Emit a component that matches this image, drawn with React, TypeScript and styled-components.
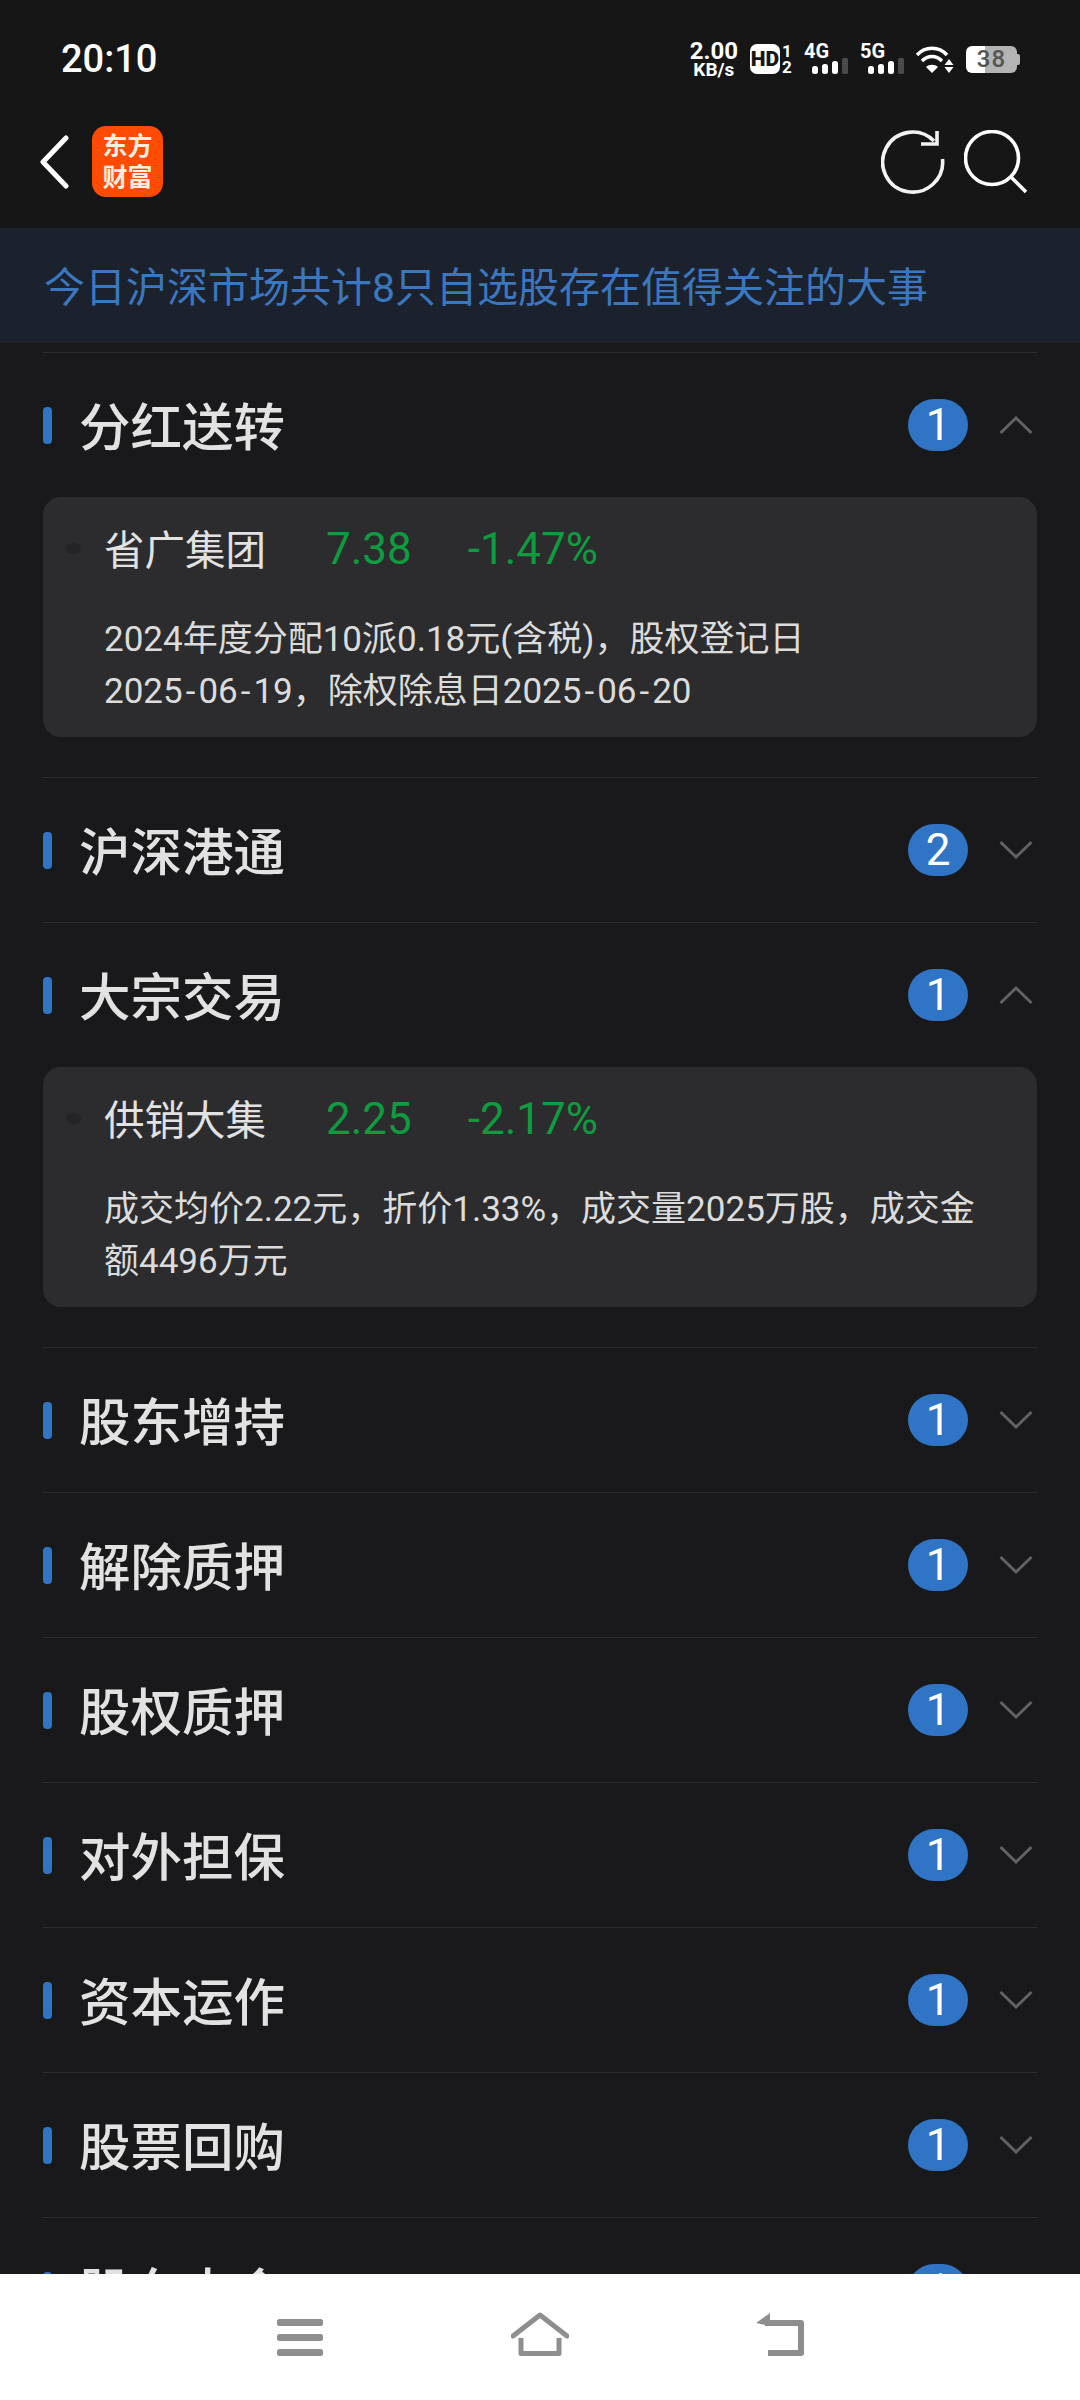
import React from "react";
import styled, { createGlobalStyle } from "styled-components";

const GlobalStyle = createGlobalStyle`
  html, body {
    margin: 0;
    padding: 0;
    background: #19191b;
  }
  * {
    box-sizing: border-box;
  }
`;

const FONT = `Roboto, "Noto Sans CJK SC", sans-serif`;

interface Stock {
  name: string;
  price: string;
  change: string;
  lines: string[];
}

interface Section {
  title: string;
  count: number;
  stock?: Stock;
}

const sections: Section[] = [
  {
    title: "分红送转",
    count: 1,
    stock: {
      name: "省广集团",
      price: "7.38",
      change: "-1.47%",
      lines: ["2024年度分配10派0.18元(含税)，股权登记日", "2025-06-19，除权除息日2025-06-20"],
    },
  },
  { title: "沪深港通", count: 2 },
  {
    title: "大宗交易",
    count: 1,
    stock: {
      name: "供销大集",
      price: "2.25",
      change: "-2.17%",
      lines: ["成交均价2.22元，折价1.33%，成交量2025万股，成交金", "额4496万元"],
    },
  },
  { title: "股东增持", count: 1 },
  { title: "解除质押", count: 1 },
  { title: "股权质押", count: 1 },
  { title: "对外担保", count: 1 },
  { title: "资本运作", count: 1 },
  { title: "股票回购", count: 1 },
  { title: "股东大会", count: 1 },
];

function SignalBars() {
  return (
    <svg width="36" height="16" viewBox="0 0 36 16">
      <rect x="0" y="8" width="6" height="8" rx="2.5" fill="#fff" />
      <rect x="10" y="6" width="6" height="10" rx="2.5" fill="#fff" />
      <rect x="20" y="3" width="6" height="13" rx="2.5" fill="#fff" />
      <rect x="30" y="0" width="6" height="16" rx="1.5" fill="#4a4a4a" />
    </svg>
  );
}

function WifiIcon() {
  return (
    <svg width="38" height="30" viewBox="0 0 38 30">
      <path d="M1 11 C9 2 23 2 31 11" fill="none" stroke="#fff" strokeWidth="3.4" />
      <path d="M6 17 C12 11 20 11 26 17" fill="none" stroke="#fff" strokeWidth="3.4" />
      <path d="M16 29 L10 23 C13 20 19 20 22 23 Z" fill="#fff" />
      <path d="M33 15 L37.5 21 H28.5 Z M28.5 23 H37.5 L33 29 Z" fill="#fff" />
    </svg>
  );
}

function Chevron({ open }: { open: boolean }) {
  return (
    <ChevronSvg viewBox="0 0 34 20" fill="none" stroke="#626264" strokeWidth="3">
      <polyline points={open ? "1.5,18 17,3 32.5,18" : "1.5,2 17,17 32.5,2"} />
    </ChevronSvg>
  );
}

// the hyphens in the dates are wider than Roboto's
function renderDescLine(line: string) {
  return line.split("-").map((part, i) => (
    <React.Fragment key={i}>
      {i > 0 && <Dash>-</Dash>}
      {part}
    </React.Fragment>
  ));
}

export default function App() {
  return (
    <Page>
      <GlobalStyle />
      <StatusBar>
        <Clock>20:10</Clock>
        <StatusIcons>
          <Speed>
            <SpeedValue>2.00</SpeedValue>
            <SpeedUnit>KB/s</SpeedUnit>
          </Speed>
          <HdGroup>
            <HdBadge>HD</HdBadge>
            <SimSlots>
              <span>1</span>
              <span>2</span>
            </SimSlots>
          </HdGroup>
          <Network>
            <NetworkLabel>4G</NetworkLabel>
            <SignalBars />
          </Network>
          <Network>
            <NetworkLabel>5G</NetworkLabel>
            <SignalBars />
          </Network>
          <WifiIcon />
          <Battery>
            <BatteryBody>38</BatteryBody>
            <BatteryNub />
          </Battery>
        </StatusIcons>
      </StatusBar>

      <NavBar>
        <NavLeft>
          <svg width="30" height="54" viewBox="0 0 30 54" fill="none" stroke="#fff" strokeWidth="5" strokeLinecap="round" strokeLinejoin="round">
            <polyline points="26,3 3,27 26,51" />
          </svg>
          <Logo>
            <span>东方</span>
            <span>财富</span>
          </Logo>
        </NavLeft>
        <NavRight>
          <svg width="64" height="64" viewBox="0 0 64 64" fill="none" stroke="#f2f2f2" strokeWidth="3.6">
            <path d="M61.5 29 A30 30 0 1 1 53 11" />
            <path d="M40 14 H56 V1" />
          </svg>
          <svg width="64" height="64" viewBox="0 0 64 64" fill="none" stroke="#fff" strokeWidth="3.6">
            <circle cx="28" cy="28" r="26.5" />
            <path d="M47 47 L62 62" />
          </svg>
        </NavRight>
      </NavBar>

      <Banner>今日沪深市场共计8只自选股存在值得关注的大事</Banner>

      <Content>
        {sections.map((section) => (
          <SectionBlock key={section.title}>
            <SectionHeader>
              <TitleBar />
              <SectionTitle>{section.title}</SectionTitle>
              <CountBadge>{section.count}</CountBadge>
              <Chevron open={!!section.stock} />
            </SectionHeader>
            {section.stock && (
              <StockCard>
                <StockRow>
                  <StockDot />
                  <StockName>{section.stock.name}</StockName>
                  <StockValue>{section.stock.price}</StockValue>
                  <StockValue>{section.stock.change}</StockValue>
                </StockRow>
                <StockDesc>
                  {section.stock.lines.map((line) => (
                    <DescLine key={line}>{renderDescLine(line)}</DescLine>
                  ))}
                </StockDesc>
              </StockCard>
            )}
          </SectionBlock>
        ))}
      </Content>

      <BottomNav>
        <NavCell>
          <svg width="46" height="37" viewBox="0 0 46 37" fill="#8e8e8e">
            <rect x="0" y="0" width="46" height="7" rx="2.5" />
            <rect x="0" y="15" width="46" height="7" rx="2.5" />
            <rect x="0" y="30" width="46" height="7" rx="2.5" />
          </svg>
        </NavCell>
        <NavCell>
          <svg width="58" height="44" viewBox="0 0 58 44" fill="none" stroke="#8e8e8e" strokeWidth="5" strokeLinejoin="round">
            <path d="M2 24 L29 3 L56 24" strokeLinecap="round" />
            <path d="M10 26 V41.5 H48 V26" />
          </svg>
        </NavCell>
        <NavCell>
          <svg width="50" height="44" viewBox="0 0 50 44" fill="none" stroke="#8e8e8e" strokeWidth="6" strokeLinejoin="round">
            <path d="M10 11 H46 V41 H13" />
            <path d="M15 1 V14 L1 11 Z" fill="#8e8e8e" stroke="none" />
          </svg>
        </NavCell>
      </BottomNav>
    </Page>
  );
}

const Page = styled.div`
  width: 1080px;
  height: 2400px;
  display: flex;
  flex-direction: column;
  overflow: hidden;
  background: #19191b;
  font-family: ${FONT};
`;

const StatusBar = styled.div`
  height: 114px;
  flex: none;
  display: flex;
  align-items: center;
  justify-content: space-between;
  padding: 4px 60px 0 61px;
  background: #161616;
`;

const Clock = styled.div`
  font-size: 38px;
  font-weight: 500;
  color: #fff;
`;

const StatusIcons = styled.div`
  display: flex;
  align-items: center;
  gap: 12px;
  color: #fff;
`;

const Speed = styled.div`
  display: flex;
  flex-direction: column;
  align-items: center;
  font-weight: 700;
`;

const SpeedValue = styled.span`
  font-size: 24px;
  line-height: 22px;
`;

const SpeedUnit = styled.span`
  font-size: 19px;
  line-height: 16px;
`;

const HdGroup = styled.div`
  display: flex;
  align-items: center;
  gap: 2px;
`;

const HdBadge = styled.div`
  width: 30px;
  height: 30px;
  border-radius: 7px;
  background: #fff;
  color: #161616;
  font-size: 21px;
  font-weight: 900;
  display: flex;
  align-items: center;
  justify-content: center;
`;

const SimSlots = styled.div`
  width: 10px;
  display: flex;
  flex-direction: column;
  align-items: center;
  font-size: 17px;
  font-weight: 700;
  line-height: 16px;
`;

const Network = styled.div`
  width: 44px;
  display: flex;
  flex-direction: column;
  align-items: flex-end;
`;

const NetworkLabel = styled.span`
  align-self: flex-start;
  font-size: 20px;
  font-weight: 700;
  line-height: 14px;
`;

const Battery = styled.div`
  display: flex;
  align-items: center;
`;

const BatteryBody = styled.div`
  width: 51px;
  height: 27px;
  border-radius: 6px;
  background: linear-gradient(90deg, #fff 38%, #b4b4b4 38%);
  color: #555;
  font-size: 24px;
  font-weight: 500;
  letter-spacing: 1px;
  display: flex;
  align-items: center;
  justify-content: center;
`;

const BatteryNub = styled.div`
  width: 3px;
  height: 11px;
  border-radius: 0 2px 2px 0;
  background: #b4b4b4;
`;

const NavBar = styled.div`
  height: 114px;
  flex: none;
  display: flex;
  align-items: center;
  justify-content: space-between;
  padding: 0 52px 19px 40px;
  background: #161616;
`;

const NavLeft = styled.div`
  display: flex;
  align-items: center;
  gap: 22px;
`;

const NavRight = styled.div`
  display: flex;
  align-items: center;
  gap: 19px;
`;

const Logo = styled.div`
  width: 71px;
  height: 71px;
  border-radius: 14px;
  background: #fd4c02;
  color: #ffeee2;
  font-size: 25px;
  font-weight: 700;
  line-height: 31px;
  display: flex;
  flex-direction: column;
  align-items: center;
  justify-content: center;
`;

const Banner = styled.div`
  height: 115px;
  flex: none;
  display: flex;
  align-items: center;
  padding: 0 0 3px 44px;
  background: #1b222d;
  color: #3b77bf;
  font-size: 41px;
`;

const Content = styled.div`
  flex: 1;
  min-height: 0;
  overflow: hidden;
  padding: 9px 43px 0;
`;

const SectionBlock = styled.section`
  border-top: 1px solid #2c2c2e;
`;

const SectionHeader = styled.div`
  height: 144px;
  display: flex;
  align-items: center;
  padding-right: 4px;
`;

const TitleBar = styled.div`
  width: 9px;
  height: 37px;
  border-radius: 4px;
  background: #2f74c5;
`;

const SectionTitle = styled.div`
  flex: 1;
  margin-left: 27px;
  padding-bottom: 3px;
  font-size: 51.5px;
  font-weight: 500;
  color: #e2e2e2;
`;

const CountBadge = styled.div`
  min-width: 60px;
  height: 52px;
  padding: 0 16px;
  border-radius: 26px;
  background: #2f74c5;
  color: #fff;
  font-size: 44px;
  display: flex;
  align-items: center;
  justify-content: center;
`;

const ChevronSvg = styled.svg`
  width: 34px;
  height: 20px;
  margin-left: 31px;
`;

const StockCard = styled.div`
  height: 240px;
  margin-bottom: 40px;
  border-radius: 18px;
  background: #2c2c2e;
  padding: 26px 38px 0 23px;
`;

const StockRow = styled.div`
  height: 50px;
  display: flex;
  align-items: center;
`;

const StockDot = styled.div`
  width: 15px;
  height: 11px;
  border-radius: 50%;
  background: #242426;
  margin-right: 23px;
`;

const StockName = styled.div`
  font-size: 40.5px;
  color: #e2e2e2;
  margin: -2px 60px 0 0;
`;

const StockValue = styled.div`
  font-size: 44px;
  color: #0f9b3f;
  margin: 1px 56px 0 0;
`;

const StockDesc = styled.div`
  margin-top: 41px;
  padding-left: 38px;
  font-size: 35px;
  line-height: 52px;
  color: #dcdcdc;
`;

const DescLine = styled.div`
  white-space: nowrap;
`;

const Dash = styled.span`
  padding: 0 3px;
`;

const BottomNav = styled.div`
  height: 126px;
  flex: none;
  display: flex;
  justify-content: center;
  background: #fff;
`;

const NavCell = styled.div`
  width: 240px;
  height: 82px;
  display: flex;
  align-items: flex-end;
  justify-content: center;
`;
